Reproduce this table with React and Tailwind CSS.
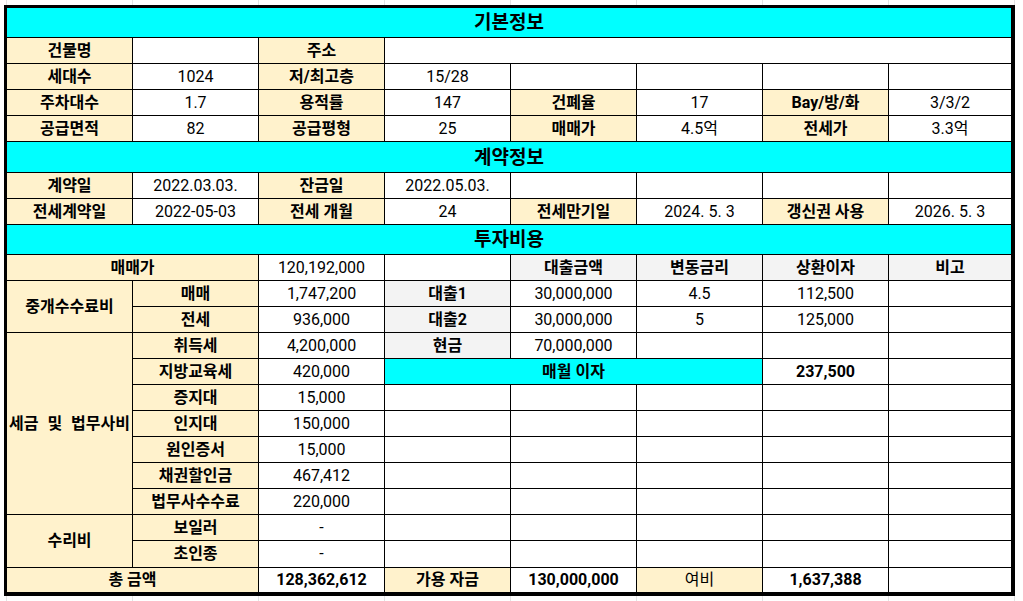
import React from "react";

const base = "flex items-center justify-center whitespace-nowrap";

function L({ children, className = "" }) {
  return <div className={`${base} bg-[#fff2cc] font-bold ${className}`}>{children}</div>;
}
function G({ children, className = "" }) {
  return <div className={`${base} bg-[#f3f3f3] font-bold ${className}`}>{children}</div>;
}
function V({ children, className = "" }) {
  return <div className={`${base} bg-white ${className}`}>{children}</div>;
}
function T({ children }) {
  return <div className={`${base} col-span-8 bg-[#00ffff] text-[19px] font-bold`}>{children}</div>;
}
function Blanks({ n }) {
  return Array.from({ length: n }).map((_, i) => <V key={i} />);
}

export default function App() {
  return (
    <div className="min-h-[601px] w-[1023px] bg-white bg-[repeating-linear-gradient(to_right,transparent_0px,transparent_6px,#e3e3e3_6px,#e3e3e3_7px,transparent_7px,transparent_126px)] pl-[4px] pt-[5px] font-[Roboto,'Noto_Sans_CJK_KR',sans-serif] text-[16px] leading-none text-black">
      <div className="w-fit border-b-4 border-l-[3px] border-r-4 border-t-[3px] border-black">
        <div className="grid grid-cols-[125px_125px_125px_125px_125px_125px_125px_122px] grid-rows-[29px_repeat(4,25px)_30px_repeat(2,25px)_29px_repeat(11,25px)_26px_24px] gap-px bg-black">
          <T>기본정보</T>
          <L>건물명</L>
          <V />
          <L>주소</L>
          <V className="col-span-5" />

          <L>세대수</L>
          <V>1024</V>
          <L>저/최고층</L>
          <V>15/28</V>
          <Blanks n={4} />

          <L>주차대수</L>
          <V>1.7</V>
          <L>용적률</L>
          <V>147</V>
          <L>건폐율</L>
          <V>17</V>
          <L>Bay/방/화</L>
          <V>3/3/2</V>

          <L>공급면적</L>
          <V>82</V>
          <L>공급평형</L>
          <V>25</V>
          <L>매매가</L>
          <V>4.5억</V>
          <L>전세가</L>
          <V>3.3억</V>

          <T>계약정보</T>
          <L>계약일</L>
          <V>2022.03.03.</V>
          <L>잔금일</L>
          <V>2022.05.03.</V>
          <Blanks n={4} />

          <L>전세계약일</L>
          <V>2022-05-03</V>
          <L>전세 개월</L>
          <V>24</V>
          <L>전세만기일</L>
          <V>2024. 5. 3</V>
          <L>갱신권 사용</L>
          <V>2026. 5. 3</V>

          <T>투자비용</T>
          <L className="col-span-2">매매가</L>
          <V>120,192,000</V>
          <V />
          <G>대출금액</G>
          <G>변동금리</G>
          <G>상환이자</G>
          <G>비고</G>

          <L className="row-span-2">중개수수료비</L>
          <L>매매</L>
          <V>1,747,200</V>
          <G>대출1</G>
          <V>30,000,000</V>
          <V>4.5</V>
          <V>112,500</V>
          <V />

          <L>전세</L>
          <V>936,000</V>
          <G>대출2</G>
          <V>30,000,000</V>
          <V>5</V>
          <V>125,000</V>
          <V />

          <L className="row-span-7 [word-spacing:5px]">세금 및 법무사비</L>
          <L>취득세</L>
          <V>4,200,000</V>
          <G>현금</G>
          <V>70,000,000</V>
          <Blanks n={3} />

          <L>지방교육세</L>
          <V>420,000</V>
          <div className={`${base} col-span-3 bg-[#00ffff] font-bold`}>매월 이자</div>
          <V className="font-bold">237,500</V>
          <V />

          <L>증지대</L>
          <V>15,000</V>
          <Blanks n={5} />

          <L>인지대</L>
          <V>150,000</V>
          <Blanks n={5} />

          <L>원인증서</L>
          <V>15,000</V>
          <Blanks n={5} />

          <L>채권할인금</L>
          <V>467,412</V>
          <Blanks n={5} />

          <L>법무사수수료</L>
          <V>220,000</V>
          <Blanks n={5} />

          <L className="row-span-2">수리비</L>
          <L>보일러</L>
          <V>-</V>
          <Blanks n={5} />

          <L>초인종</L>
          <V>-</V>
          <Blanks n={5} />

          <L className="col-span-2">총 금액</L>
          <V className="font-bold">128,362,612</V>
          <L>가용 자금</L>
          <V className="font-bold">130,000,000</V>
          <div className={`${base} bg-[#fff2cc]`}>여비</div>
          <V className="font-bold">1,637,388</V>
          <V />
        </div>
      </div>
    </div>
  );
}
